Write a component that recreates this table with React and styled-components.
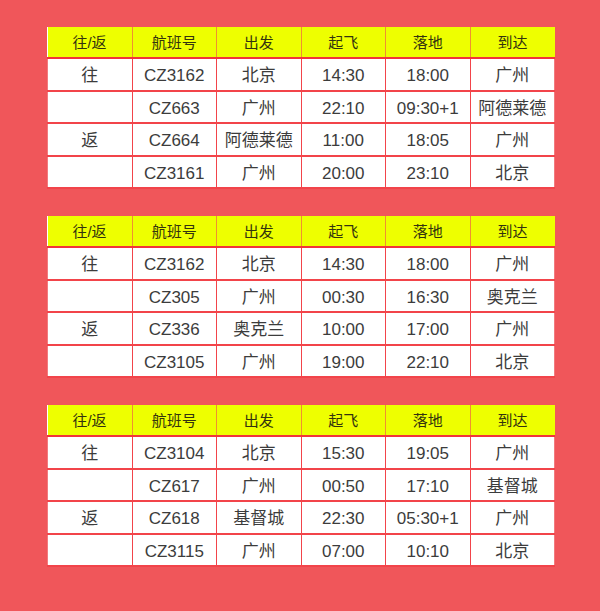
import React from 'react'
import styled, { createGlobalStyle } from 'styled-components'

const GlobalStyle = createGlobalStyle`
  html, body {
    margin: 0;
    padding: 0;
    background: #f0565a;
  }
  body {
    font-family: "Liberation Sans", "Noto Sans CJK SC", sans-serif;
  }
`

const columns = ['往/返', '航班号', '出发', '起飞', '落地', '到达']

const schedules = [
  [
    ['往', 'CZ3162', '北京', '14:30', '18:00', '广州'],
    ['', 'CZ663', '广州', '22:10', '09:30+1', '阿德莱德'],
    ['返', 'CZ664', '阿德莱德', '11:00', '18:05', '广州'],
    ['', 'CZ3161', '广州', '20:00', '23:10', '北京'],
  ],
  [
    ['往', 'CZ3162', '北京', '14:30', '18:00', '广州'],
    ['', 'CZ305', '广州', '00:30', '16:30', '奥克兰'],
    ['返', 'CZ336', '奥克兰', '10:00', '17:00', '广州'],
    ['', 'CZ3105', '广州', '19:00', '22:10', '北京'],
  ],
  [
    ['往', 'CZ3104', '北京', '15:30', '19:05', '广州'],
    ['', 'CZ617', '广州', '00:50', '17:10', '基督城'],
    ['返', 'CZ618', '基督城', '22:30', '05:30+1', '广州'],
    ['', 'CZ3115', '广州', '07:00', '10:10', '北京'],
  ],
]

function App() {
  return (
    <Page>
      <GlobalStyle />
      {schedules.map((rows, i) => (
        <FlightTable key={i}>
          <thead>
            <tr>
              {columns.map((c) => (
                <HeadCell key={c}>{c}</HeadCell>
              ))}
            </tr>
          </thead>
          <tbody>
            {rows.map((row, r) => (
              <tr key={r}>
                {row.map((cell, c) => (
                  <Cell key={c}>{cell}</Cell>
                ))}
              </tr>
            ))}
          </tbody>
        </FlightTable>
      ))}
    </Page>
  )
}

export default App

const Page = styled.div`
  display: flex;
  flex-direction: column;
  gap: 27px;
  padding: 27px 0 0 47px;
  height: 611px;
  box-sizing: border-box;
`

const FlightTable = styled.table`
  width: 508px;
  border-collapse: collapse;
  table-layout: fixed;
  background: #fff;
`

const HeadCell = styled.th`
  height: 30px;
  padding: 0;
  background: #eeff00;
  color: #33330f;
  font-size: 15px;
  font-weight: 400;
  line-height: 1;
  text-align: center;
  border: 1px solid #f09030;
  border-top: 0;
  border-bottom: 2px solid #f2343a;
  &:first-child { border-left: 0; }
  &:last-child { border-right: 0; }
`

const Cell = styled.td`
  height: 27.5px;
  padding: 3px 0 0;
  color: #3c3c3c;
  font-size: 17px;
  line-height: 1;
  text-align: center;
  white-space: nowrap;
  border: 1px solid #f2444a;
  border-bottom-width: 2px;
  &:first-child { border-left-color: #f27a7e; }
  &:last-child { border-right-color: #f27a7e; }
`
